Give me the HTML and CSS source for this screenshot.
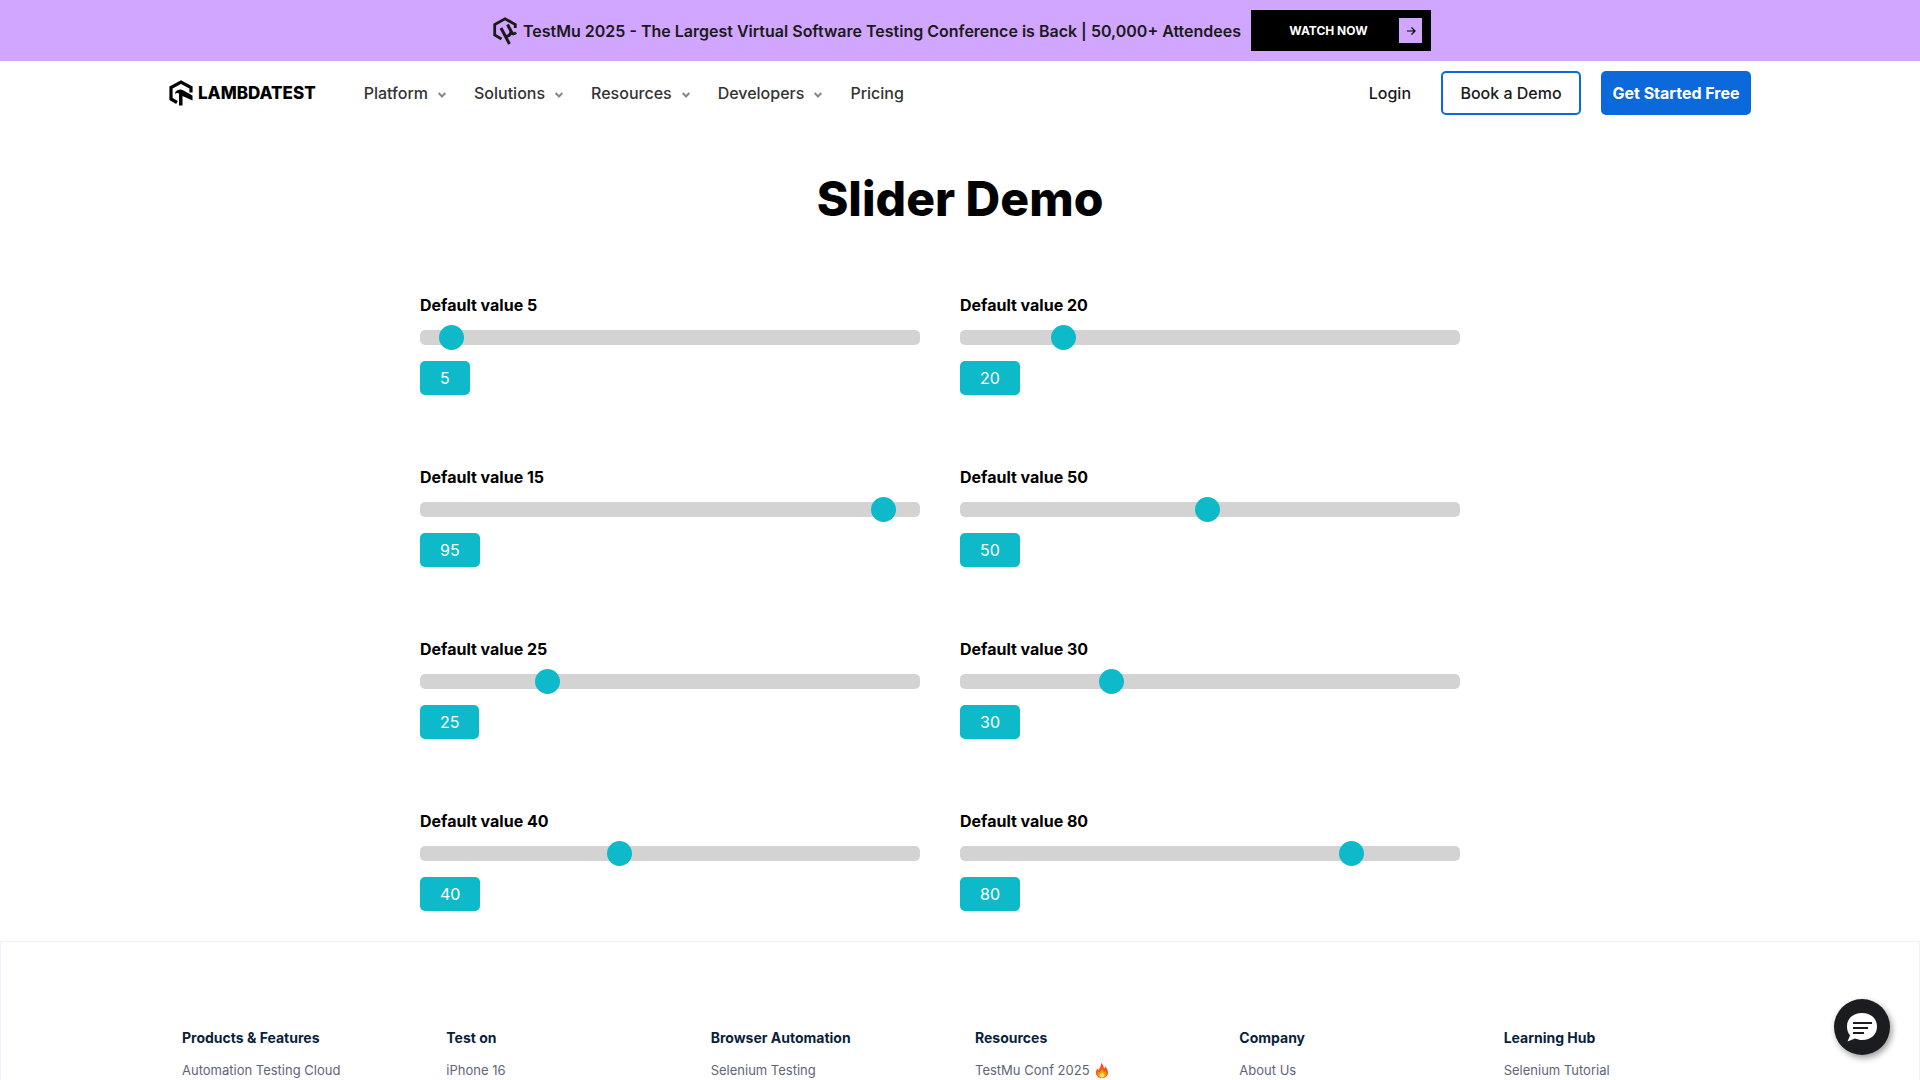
FILE: index.html
```
<!DOCTYPE html>
<html lang="en">
<head>
<meta charset="utf-8">
<meta name="viewport" content="width=device-width, initial-scale=1">
<title>Slider Demo | LambdaTest</title>
<link rel="stylesheet" href="styles.css">
</head>
<body>
<aside class="banner">
  <p class="banner-text">
    <svg class="banner-icon" viewBox="0 0 24 28" aria-hidden="true"><path d="M8.500 22L1.700 18V7.500L12 1.800l10.300 5.700V11" fill="none" stroke="currentColor" stroke-width="2.800"/><path d="M8 11l8.500 16M14.500 7.500l4.500 8.500M12.500 19q4.500 1 5.500-4.500M19 16q1.500 2 4-.5" fill="none" stroke="currentColor" stroke-width="3"/></svg>
    <span>TestMu 2025 - The Largest Virtual Software Testing Conference is Back | 50,000+ Attendees</span>
  </p>
  <a class="banner-cta" href="#"><span class="cta-label">WATCH NOW</span>
    <span class="cta-arrow"><svg viewBox="0 0 10 10" aria-hidden="true"><path d="M1 5h8M5.500 1.500L9 5 5.500 8.500" fill="none" stroke="currentColor" stroke-width="1.200"/></svg></span></a>
</aside>
<header class="header">
  <a class="logo" href="#" aria-label="LambdaTest home">
    <svg class="logo-icon" viewBox="0 0 24 26" aria-hidden="true"><path d="M8 22.500L2 19V7.500L12 2l10 5.500v5" fill="none" stroke="currentColor" stroke-width="3.200"/><path d="M6 14q0-3 3-4 2.500-1 4.500 0L23.500 15.500v5L13.500 16v9.500H10V13.500Q8 12.500 6 14z" fill="currentColor"/></svg>
    <span class="logo-word">LAMBDATEST</span>
  </a>
  <nav class="nav" aria-label="Main">
    <button class="nav-item" type="button">Platform <svg class="chevron" viewBox="0 0 8 6" aria-hidden="true"><path d="M.7 1L4 4.500 7.300 1"/></svg></button>
    <button class="nav-item" type="button">Solutions <svg class="chevron" viewBox="0 0 8 6" aria-hidden="true"><path d="M.7 1L4 4.500 7.300 1"/></svg></button>
    <button class="nav-item" type="button">Resources <svg class="chevron" viewBox="0 0 8 6" aria-hidden="true"><path d="M.7 1L4 4.500 7.300 1"/></svg></button>
    <button class="nav-item" type="button">Developers <svg class="chevron" viewBox="0 0 8 6" aria-hidden="true"><path d="M.7 1L4 4.500 7.300 1"/></svg></button>
    <a class="nav-item" href="#">Pricing</a>
  </nav>
  <div class="actions">
    <a class="login" href="#">Login</a>
    <button class="btn btn-outline" type="button">Book a Demo</button>
    <a class="btn btn-primary" href="#">Get Started Free</a>
  </div>
</header>
<main>
  <h1 class="title">Slider Demo</h1>
  <div class="sliders">
    <div class="field"><label for="s1">Default value 5</label><input id="s1" class="range" type="range" min="1" max="100" value="5"><output for="s1">5</output></div>
    <div class="field"><label for="s2">Default value 20</label><input id="s2" class="range" type="range" min="1" max="100" value="20"><output for="s2">20</output></div>
    <div class="field"><label for="s3">Default value 15</label><input id="s3" class="range" type="range" min="1" max="100" value="95"><output for="s3">95</output></div>
    <div class="field"><label for="s4">Default value 50</label><input id="s4" class="range" type="range" min="1" max="100" value="50"><output for="s4">50</output></div>
    <div class="field"><label for="s5">Default value 25</label><input id="s5" class="range" type="range" min="1" max="100" value="25"><output for="s5">25</output></div>
    <div class="field"><label for="s6">Default value 30</label><input id="s6" class="range" type="range" min="1" max="100" value="30"><output for="s6">30</output></div>
    <div class="field"><label for="s7">Default value 40</label><input id="s7" class="range" type="range" min="1" max="100" value="40"><output for="s7">40</output></div>
    <div class="field"><label for="s8">Default value 80</label><input id="s8" class="range" type="range" min="1" max="100" value="80"><output for="s8">80</output></div>
  </div>
</main>
<footer class="footer">
  <div class="footer-grid">
    <section><h2>Products &amp; Features</h2><a href="#">Automation Testing Cloud</a></section>
    <section><h2>Test on</h2><a href="#">iPhone 16</a></section>
    <section><h2>Browser Automation</h2><a href="#">Selenium Testing</a></section>
    <section><h2>Resources</h2><a href="#">TestMu Conf 2025 <svg class="fire" viewBox="0 0 12 15" aria-hidden="true"><path fill="#f4511e" d="M5 0c3 2 2 4 3.500 5.500C9 5 9 4 9 3.200 11 5 12 7.500 12 9.500 12 13 9.500 15 6 15S0 13 0 9.500C0 7.500 1 6 1.600 5c0 1.200.4 2 1 2.200C3.500 5 5.500 3 5 0z"/><path fill="#ff9800" d="M6 5c1 2 1.500 3 2.500 4 .5-.4.700-1 .7-1.500 1 1 1.300 2 1.300 3C10.500 13 8.500 14.500 6 14.500S1.500 13 1.500 10.500c0-.8.300-1.500.6-2 .4.900.9 1.100 1.400 1.100C4.500 8 6 7.500 6 5z"/><path fill="#ffe36b" d="M6 9c1 1.500 2.500 2 2.500 3.500 0 1.200-1 2-2.500 2s-2.500-.8-2.500-2C3.500 11 5.500 11 6 9z"/></svg></a></section>
    <section><h2>Company</h2><a href="#">About Us</a></section>
    <section><h2>Learning Hub</h2><a href="#">Selenium Tutorial</a></section>
  </div>
</footer>
<button class="chat" type="button" aria-label="Open chat"><svg viewBox="0 0 30 30" aria-hidden="true"><path fill="#fff" d="M15 1c9 0 15 5.500 15 13.500S24 28 15.500 28c-3 0-5.500-.6-7.500-1.500L.5 29.500 3 23.500C1 21 0 18 0 14.500 0 6.500 6 1 15 1z"/><path d="M6 11h19M6 16h15M6 21h11" stroke="#1b1c20" stroke-width="2"/></svg></button>
</body>
</html>
```
FILE: styles.css
```
* { box-sizing: border-box; }
body {
  margin: 0;
  min-height: 100vh;
  display: flex;
  flex-direction: column;
  background: #fff;
  color: #000;
  font: 16px/24px Inter, "Liberation Sans", sans-serif;
}
a { color: inherit; text-decoration: none; }
button { font: inherit; cursor: pointer; }

.banner {
  display: flex;
  justify-content: center;
  align-items: center;
  gap: 10px;
  padding: 10px 0 10px 4px;
  background: #d1a6ff;
  color: #1a1a1a;
}
.banner-text { display: flex; align-items: center; gap: 6px; margin: 0; font-weight: 600; }
.banner-icon { width: 24px; height: 28px; }
.banner-cta {
  display: flex;
  align-items: center;
  width: 180px;
  height: 41px;
  padding: 0 9px 0 7px;
  background: #000;
  color: #fff;
  font-size: 12px;
  font-weight: 700;
}
.cta-label { flex: 1; text-align: center; }
.cta-arrow { display: grid; place-items: center; width: 23px; height: 25px; background: #d1a6ff; color: #000; }
.cta-arrow svg { width: 10px; height: 10px; }

.header {
  display: flex;
  align-items: center;
  width: 100%;
  max-width: 1584px;
  height: 64px;
  margin: 0 auto;
  padding: 0 1px;
}
.logo { display: flex; align-items: center; gap: 5px; }
.logo-icon { width: 24px; height: 26px; }
.logo-word { font-size: 17px; font-weight: 800; }
.nav { display: flex; gap: 28px; margin-left: 48px; color: #333; font-weight: 500; }
.nav-item { display: flex; align-items: center; gap: 10px; padding: 0; border: 0; background: none; color: inherit; }
.chevron { width: 8px; height: 6px; margin-top: 3px; fill: none; stroke: #888; stroke-width: 2; overflow: visible; }
.actions { display: flex; align-items: center; gap: 20px; margin-left: auto; color: #1a1a1a; font-weight: 500; }
.login { margin-right: 10px; }
.btn { display: grid; place-items: center; height: 44px; border-radius: 5px; }
.btn-outline { width: 140px; padding: 0; border: 2px solid #0b69dc; background: #fff; color: inherit; }
.btn-primary { width: 150px; background: #0b69dc; color: #fff; font-weight: 700; }

.title { margin: 44px 0 64px; font-size: 48px; line-height: 60px; font-weight: 800; text-align: center; }
.sliders {
  display: grid;
  grid-template-columns: 1fr 1fr;
  gap: 70px 40px;
  max-width: 1080px;
  margin: 0 auto;
  padding-right: 40px;
}
.field { display: flex; flex-direction: column; align-items: flex-start; }
.field label { font-weight: 700; }
.range { -webkit-appearance: none; appearance: none; width: 100%; height: 15px; margin: 13px 0 16px; border-radius: 5px; background: #d3d3d3; }
.range::-webkit-slider-thumb { -webkit-appearance: none; width: 25px; height: 25px; border-radius: 50%; background: #0ebac9; }
.range::-moz-range-thumb { width: 25px; height: 25px; border: 0; border-radius: 50%; background: #0ebac9; }
output { padding: 5px 20px; border-radius: 5px; background: #0ebac9; color: #fff; }

.footer { flex: 1; margin-top: 30px; padding: 84px 0 0; border: 1px solid #efefff; border-bottom: 0; }
.footer-grid { display: grid; grid-template-columns: repeat(6, 1fr); max-width: 1586px; margin: 0 auto; }
.footer-grid section { padding: 0 15px; }
.footer-grid h2 { margin: 0 0 10px; font-size: 14px; line-height: 24px; font-weight: 700; color: #0a1f3c; }
.footer-grid a { display: flex; align-items: center; gap: 6px; font-size: 13px; line-height: 20px; color: #5f6577; }
.fire { width: 12px; height: 15px; }

.chat {
  position: fixed;
  right: 30px;
  bottom: 25px;
  display: grid;
  place-items: center;
  width: 56px;
  height: 56px;
  padding: 0;
  border: 0;
  border-radius: 50%;
  background: #1b1c20;
  box-shadow: 2px 3px 6px rgb(0 0 0 / 40%);
}
.chat svg { width: 30px; height: 30px; }
```
